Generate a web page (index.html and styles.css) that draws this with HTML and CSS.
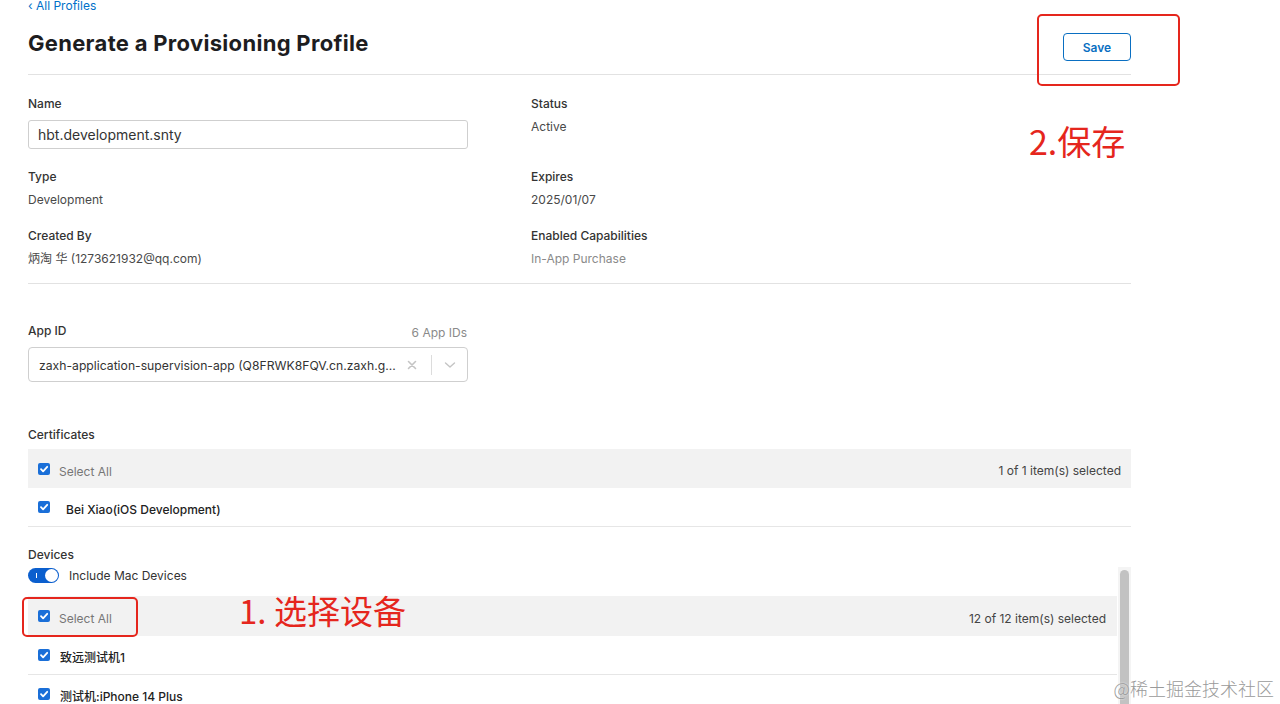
FILE: index.html
```html
<!DOCTYPE html>
<html lang="en">
<head>
<meta charset="utf-8">
<title>Generate a Provisioning Profile</title>
<link rel="stylesheet" href="styles.css">
</head>
<body>
<div class="page">
  <a class="back" href="#">‹ All Profiles</a>
  <div class="head">
    <h1 class="title">Generate a Provisioning Profile</h1>
    <button class="save">Save</button>
  </div>

  <div class="info">
    <div class="field">
      <div class="label">Name</div>
      <div class="input">hbt.development.snty</div>
    </div>
    <div class="field">
      <div class="label">Status</div>
      <div class="value">Active</div>
    </div>
    <div class="field">
      <div class="label">Type</div>
      <div class="value">Development</div>
    </div>
    <div class="field">
      <div class="label">Expires</div>
      <div class="value">2025/01/07</div>
    </div>
    <div class="field">
      <div class="label">Created By</div>
      <div class="value">炳淘 华 (1273621932@qq.com)</div>
    </div>
    <div class="field">
      <div class="label">Enabled Capabilities</div>
      <div class="value muted">In-App Purchase</div>
    </div>
  </div>

  <section class="appid">
    <div class="appid-head">
      <span class="label">App ID</span>
      <span class="count">6 App IDs</span>
    </div>
    <div class="select">
      <span class="select-text">zaxh-application-supervision-app (Q8FRWK8FQV.cn.zaxh.g...</span>
      <span class="clear">
        <svg width="10" height="10" viewBox="0 0 10 10"><path d="M1.5 1.5 L8.5 8.5 M8.5 1.5 L1.5 8.5" stroke="#c4c4c4" stroke-width="1.6" stroke-linecap="round"/></svg>
      </span>
      <span class="sep"></span>
      <span class="chev">
        <svg width="12" height="8" viewBox="0 0 12 8"><path d="M1.5 2 L6 6 L10.5 2" stroke="#c4c4c4" stroke-width="1.4" fill="none" stroke-linecap="round" stroke-linejoin="round"/></svg>
      </span>
    </div>
  </section>

  <section class="certs">
    <div class="label">Certificates</div>
    <div class="list-head">
      <div class="check-wrap">
        <span class="cb"><svg viewBox="0 0 12 12" width="12" height="12"><path d="M3 6.2 L5.1 8.3 L9.2 3.8" stroke="#fff" stroke-width="1.8" fill="none" stroke-linecap="round" stroke-linejoin="round"/></svg></span>
        <span class="select-all">Select All</span>
      </div>
      <span class="selected">1 of 1 item(s) selected</span>
    </div>
    <div class="row">
      <span class="cb"><svg viewBox="0 0 12 12" width="12" height="12"><path d="M3 6.2 L5.1 8.3 L9.2 3.8" stroke="#fff" stroke-width="1.8" fill="none" stroke-linecap="round" stroke-linejoin="round"/></svg></span>
      <span class="row-text cert">Bei Xiao(iOS Development)</span>
    </div>
  </section>

  <section class="devices">
    <div class="label">Devices</div>
    <div class="scroll">
      <div class="scroll-body">
        <div class="toggle-row">
          <span class="toggle"><span class="toggle-mark"></span><span class="knob"></span></span>
          <span class="toggle-text">Include Mac Devices</span>
        </div>
        <div class="list-head dev-head">
          <div class="check-wrap">
            <span class="cb"><svg viewBox="0 0 12 12" width="12" height="12"><path d="M3 6.2 L5.1 8.3 L9.2 3.8" stroke="#fff" stroke-width="1.8" fill="none" stroke-linecap="round" stroke-linejoin="round"/></svg></span>
            <span class="select-all">Select All</span>
          </div>
          <span class="selected">12 of 12 item(s) selected</span>
        </div>
        <div class="row">
          <span class="cb"><svg viewBox="0 0 12 12" width="12" height="12"><path d="M3 6.2 L5.1 8.3 L9.2 3.8" stroke="#fff" stroke-width="1.8" fill="none" stroke-linecap="round" stroke-linejoin="round"/></svg></span>
          <span class="row-text">致远测试机1</span>
        </div>
        <div class="row">
          <span class="cb"><svg viewBox="0 0 12 12" width="12" height="12"><path d="M3 6.2 L5.1 8.3 L9.2 3.8" stroke="#fff" stroke-width="1.8" fill="none" stroke-linecap="round" stroke-linejoin="round"/></svg></span>
          <span class="row-text">测试机:iPhone 14 Plus</span>
        </div>
      </div>
      <div class="scrollbar"><div class="thumb"></div></div>
    </div>
  </section>
</div>

<div class="annot box-save"></div>
<div class="annot text-save">2.保存</div>
<div class="annot box-select"></div>
<div class="annot text-select">1. 选择设备</div>
<div class="watermark">@稀土掘金技术社区</div>
</body>
</html>
```

FILE: styles.css
```css
html, body {
  margin: 0;
  padding: 0;
  background: #ffffff;
}
body {
  width: 1280px;
  height: 704px;
  overflow: hidden;
  position: relative;
  font-family: Inter, "Noto Sans CJK SC", sans-serif;
  color: #333;
  font-size: 12px;
}
.page {
  width: 1103px;
  margin-left: 28px;
}
.back {
  display: block;
  margin-top: -2px;
  font-size: 12px;
  line-height: 16px;
  color: #0070c9;
  text-decoration: none;
}
.head {
  margin-top: 15px;
  display: flex;
  justify-content: space-between;
  align-items: flex-start;
  padding-bottom: 13px;
  border-bottom: 1px solid #e2e2e2;
}
.title {
  margin: 0;
  font-size: 22px;
  line-height: 28px;
  font-weight: 700;
  color: #1d1d1f;
  letter-spacing: 0.3px;
}
.save {
  margin-top: 4px;
  width: 68px;
  height: 28px;
  border: 1px solid #0a6fc2;
  border-radius: 4px;
  background: #fff;
  color: #0a6fc2;
  font-family: Inter, sans-serif;
  font-size: 12px;
  font-weight: 600;
  padding: 0;
}
.info {
  display: grid;
  grid-template-columns: 503px 1fr;
  row-gap: 20px;
  padding-top: 21px;
  padding-bottom: 16px;
  border-bottom: 1px solid #e2e2e2;
}
.label {
  font-size: 12px;
  line-height: 16px;
  font-weight: 500;
  color: #333;
}
.value {
  margin-top: 7px;
  font-size: 12px;
  line-height: 16px;
  color: #494949;
}
.value.muted {
  color: #8a8a8a;
}
.input {
  margin-top: 8px;
  width: 440px;
  height: 29px;
  box-sizing: border-box;
  border: 1px solid #cfcfcf;
  border-radius: 3px;
  padding: 0 9px;
  font-size: 14px;
  line-height: 27px;
  color: #333;
}
.appid {
  margin-top: 39px;
  width: 440px;
}
.appid-head {
  display: flex;
  justify-content: space-between;
  align-items: baseline;
}
.count {
  font-size: 12px;
  color: #8a8a8a;
  margin-right: 1px;
  position: relative;
  top: 2px;
}
.select {
  margin-top: 8px;
  height: 35px;
  box-sizing: border-box;
  border: 1px solid #cfcfcf;
  border-radius: 4px;
  display: flex;
  align-items: center;
  padding-left: 10px;
}
.select-text {
  flex: 1;
  min-width: 0;
  white-space: nowrap;
  overflow: hidden;
  font-size: 12.2px;
  color: #333;
  padding-top: 1px;
}
.clear {
  width: 10px;
  height: 10px;
  display: flex;
  margin-left: 8px;
  margin-right: 14px;
}
.sep {
  width: 1px;
  height: 20px;
  background: #dcdcdc;
}
.chev {
  width: 35px;
  display: flex;
  justify-content: center;
}
.certs {
  margin-top: 45px;
}
.list-head {
  margin-top: 6px;
  height: 39px;
  background: #f2f2f2;
  display: flex;
  align-items: center;
  justify-content: space-between;
  padding: 0 10px;
}
.check-wrap {
  display: flex;
  align-items: center;
}
.cb {
  width: 12px;
  height: 12px;
  border-radius: 2px;
  background: #1a6fd8;
  display: flex;
  flex: none;
}
.select-all {
  margin-left: 9px;
  color: #767676;
  font-size: 12px;
  padding-top: 5px;
}
.selected {
  color: #444;
  font-size: 12px;
  padding-top: 4px;
}
.row {
  height: 38px;
  border-bottom: 1px solid #e6e6e6;
  display: flex;
  align-items: center;
  padding-left: 10px;
}
.row-text {
  margin-left: 10px;
  font-size: 12px;
  font-weight: 500;
  color: #222;
  padding-top: 2px;
}
.row-text.cert {
  margin-left: 16px;
  padding-top: 4px;
}
.devices {
  margin-top: 20px;
}
.scroll {
  margin-top: 4px;
  display: flex;
  align-items: flex-start;
}
.scroll-body {
  width: 1089px;
}
.toggle-row {
  height: 16px;
  display: flex;
  align-items: center;
}
.toggle {
  position: relative;
  width: 31px;
  height: 15px;
  border-radius: 8px;
  background: #0b5fce;
  display: flex;
  align-items: center;
  justify-content: flex-end;
  box-sizing: border-box;
  padding-right: 1px;
}
.toggle-mark {
  position: absolute;
  left: 8px;
  top: 5px;
  width: 1px;
  height: 5px;
  background: #fff;
}
.knob {
  width: 13px;
  height: 13px;
  border-radius: 50%;
  background: #fff;
}
.toggle-text {
  margin-left: 10px;
  font-size: 12px;
  color: #333;
}
.dev-head {
  margin-top: 13px;
  height: 40px;
  padding-right: 11px;
}
.scrollbar {
  margin-left: 1px;
  width: 13px;
  height: 140px;
  background: #f4f4f4;
  display: flex;
  justify-content: center;
  padding-top: 3px;
  box-sizing: border-box;
}
.thumb {
  width: 9px;
  height: 200px;
  border-radius: 5px;
  background: #c2c2c2;
}
.annot {
  position: absolute;
}
.box-save {
  left: 1037px;
  top: 14px;
  width: 143px;
  height: 72px;
  box-sizing: border-box;
  border: 2px solid #e5261d;
  border-radius: 5px;
}
.text-save {
  left: 1029px;
  top: 121px;
  font-family: "Noto Sans CJK SC", sans-serif;
  font-size: 34px;
  line-height: 40px;
  color: #e5261d;
}
.box-select {
  left: 22px;
  top: 597px;
  width: 116px;
  height: 40px;
  box-sizing: border-box;
  border: 2px solid #e5261d;
  border-radius: 5px;
}
.text-select {
  left: 239px;
  top: 591px;
  font-family: "Noto Sans CJK SC", sans-serif;
  font-size: 33px;
  line-height: 38px;
  color: #e5261d;
}
.watermark {
  position: absolute;
  right: 6px;
  top: 676px;
  font-family: "Noto Sans CJK SC", sans-serif;
  font-size: 18px;
  font-weight: 300;
  line-height: 24px;
  color: #9a9a9a;
  text-shadow: 0 0 2px #fff;
}
```
